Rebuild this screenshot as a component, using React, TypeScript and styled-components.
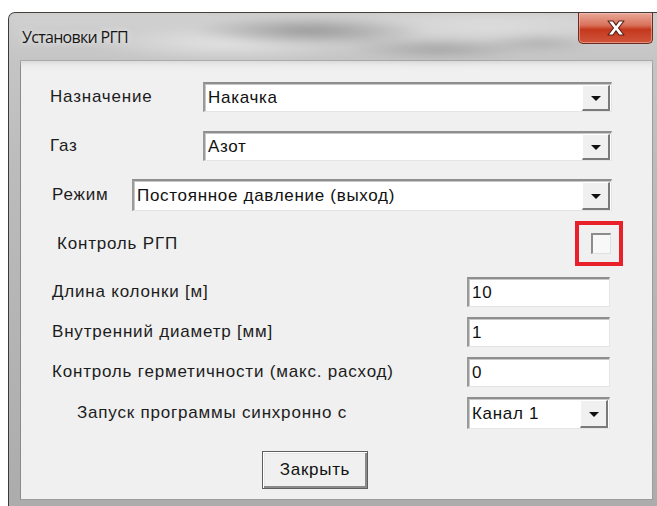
import React from "react";
import styled, { createGlobalStyle } from "styled-components";

const GlobalStyle = createGlobalStyle`
  html, body {
    margin: 0;
    padding: 0;
    background: #ffffff;
  }
  body {
    font-family: "Liberation Sans", Arial, sans-serif;
    color: #1c1c1c;
  }
`;

const Page = styled.div`
  width: 657px;
  height: 506px;
  box-sizing: border-box;
  padding: 12px 0 0 8px;
  overflow: hidden;
`;

const Window = styled.div`
  height: 494px;
  display: flex;
  flex-direction: column;
  box-sizing: border-box;
  padding: 0 4px 6px 11px;
  border-left: 1px solid #3c3a38;
  border-top: 1px solid #45403c;
  border-top-left-radius: 7px;
  background: linear-gradient(to bottom, #c9c9c9 0%, #bcbcbc 30%, #acacac 100%);
  position: relative;
  overflow: hidden;
`;

/* blurred glass behind the caption */
const Glass = styled.div`
  position: absolute;
  inset: 0 0 auto 0;
  height: 48px;
  background:
    radial-gradient(ellipse 120px 14px at 300px 18px, rgba(130, 130, 130, 0.75), transparent),
    radial-gradient(ellipse 90px 10px at 430px 36px, rgba(140, 140, 140, 0.65), transparent),
    radial-gradient(ellipse 60px 8px at 530px 30px, rgba(150, 150, 150, 0.6), transparent),
    radial-gradient(ellipse 140px 18px at 220px 30px, rgba(235, 235, 235, 0.8), transparent),
    radial-gradient(ellipse 160px 20px at 480px 14px, rgba(225, 225, 225, 0.8), transparent),
    linear-gradient(to bottom, #d2d2d2, #c4c4c4);
  filter: blur(4px);
`;

const TitleBar = styled.div`
  position: relative;
  height: 47px;
  display: flex;
  align-items: flex-start;
  justify-content: space-between;
`;

const Title = styled.div`
  margin-top: 13px;
  margin-left: 2px;
  font-family: "Open Sans", "Liberation Sans", sans-serif;
  font-size: 16px;
  color: #161616;
  letter-spacing: -0.7px;
  text-shadow: 0 0 6px rgba(255, 255, 255, 0.9);
`;

const CloseButton = styled.div`
  width: 75px;
  height: 31px;
  box-sizing: border-box;
  border: 1px solid #6a2c22;
  border-top: none;
  border-radius: 0 0 5px 5px;
  background: linear-gradient(to bottom, #e8a898 0%, #d9735c 40%, #c5391e 55%, #d0553a 100%);
  box-shadow: inset 0 0 0 1px rgba(255, 200, 190, 0.5);
  display: flex;
  align-items: center;
  justify-content: center;
`;

const Client = styled.div`
  flex: 1;
  display: flex;
  flex-direction: column;
  background: #f0f0f0;
  border: 1px solid #8a8a8a;
  border-right-color: #9c9c9c;
  border-bottom-color: #9c9c9c;
  padding-top: 21px;
`;

const Row = styled.div<{ $h: number; $mt: number; $indent: number; $right?: number }>`
  display: flex;
  align-items: center;
  height: ${(p) => p.$h}px;
  margin-top: ${(p) => p.$mt}px;
  padding-left: ${(p) => p.$indent}px;
  padding-right: ${(p) => p.$right ?? 0}px;
  flex: 0 0 auto;
`;

const Label = styled.span<{ $w?: number }>`
  font-size: 17px;
  letter-spacing: 0.8px;
  white-space: nowrap;
  ${(p) => (p.$w ? `width: ${p.$w}px; flex: 0 0 auto;` : "flex: 1 1 auto;")}
`;

const sunken = `
  box-sizing: border-box;
  background: #ffffff;
  border-style: solid;
  border-width: 2px 1px 1px 2px;
  border-color: #8e8e8e #e4e4e4 #e4e4e4 #9a9a9a;
  box-shadow: inset 1px 1px 0 #c8c8c8;
`;

const Combo = styled.div<{ $w: number; $h: number }>`
  ${sunken}
  width: ${(p) => p.$w}px;
  height: ${(p) => p.$h}px;
  display: flex;
  align-items: stretch;
`;

const FieldText = styled.span`
  flex: 1;
  display: flex;
  align-items: center;
  padding-left: 3px;
  font-size: 17px;
  letter-spacing: 0.7px;
  color: #111;
  white-space: nowrap;
`;

const DropButton = styled.div`
  width: 28px;
  flex: 0 0 auto;
  box-sizing: border-box;
  margin: 1px 1px 0 0;
  background: #f0f0f0;
  border-style: solid;
  border-width: 1px 2px 2px 1px;
  border-color: #ffffff #7a7a7a #7a7a7a #ffffff;
  display: flex;
  align-items: center;
  justify-content: center;
`;

const Arrow = styled.span`
  width: 0;
  height: 0;
  border-left: 5px solid transparent;
  border-right: 5px solid transparent;
  border-top: 5px solid #111;
  margin-top: 2px;
`;

const Input = styled.div`
  ${sunken}
  width: 143px;
  height: 30px;
  display: flex;
`;

const Highlight = styled.div`
  width: 48px;
  height: 45px;
  box-sizing: border-box;
  border: 4px solid #e8202a;
  display: flex;
  align-items: center;
  justify-content: center;
`;

const CheckBox = styled.div`
  width: 20px;
  height: 21px;
  box-sizing: border-box;
  background: #f8f8f8;
  border-style: solid;
  border-width: 2px 1px 1px 2px;
  border-color: #8c8c8c #e0e0e0 #e0e0e0 #8c8c8c;
  margin-left: 4px;
`;

const CloseDialog = styled.div`
  width: 106px;
  height: 38px;
  margin-left: 241px;
  box-sizing: border-box;
  background: #f0f0f0;
  border: 1px solid #5e5e5e;
  box-shadow: inset 1px 1px 0 #ffffff, inset -2px -2px 0 #8a8a8a, inset 2px 2px 0 #e6e6e6;
  display: flex;
  align-items: center;
  justify-content: center;
  font-size: 17px;
  letter-spacing: 0.7px;
  color: #111;
`;

const ComboField = ({ value, w, h }: { value: string; w: number; h: number }) => (
  <Combo $w={w} $h={h}>
    <FieldText>{value}</FieldText>
    <DropButton>
      <Arrow />
    </DropButton>
  </Combo>
);

const TextField = ({ value }: { value: string }) => (
  <Input>
    <FieldText>{value}</FieldText>
  </Input>
);

export default function App() {
  return (
    <Page>
      <GlobalStyle />
      <Window>
        <Glass />
        <TitleBar>
          <Title>Установки РГП</Title>
          <CloseButton>
            <svg width="22" height="18" viewBox="0 0 22 18">
              <path
                d="M3 2h5l3 4.2L14 2h5l-5.5 7 5.5 7h-5l-3-4.2L8 16H3l5.5-7z"
                fill="#ffffff"
                stroke="#5a2018"
                strokeWidth="1.2"
                strokeLinejoin="round"
              />
            </svg>
          </CloseButton>
        </TitleBar>
        <Client>
          <Row $h={30} $mt={0} $indent={29}>
            <Label $w={153}>Назначение</Label>
            <ComboField value="Накачка" w={409} h={30} />
          </Row>
          <Row $h={30} $mt={19} $indent={29}>
            <Label $w={153}>Газ</Label>
            <ComboField value="Азот" w={409} h={30} />
          </Row>
          <Row $h={32} $mt={18} $indent={31}>
            <Label $w={80}>Режим</Label>
            <ComboField value="Постоянное давление (выход)" w={480} h={32} />
          </Row>
          <Row $h={45} $mt={10} $indent={36} $right={29}>
            <Label>Контроль РГП</Label>
            <Highlight>
              <CheckBox />
            </Highlight>
          </Row>
          <Row $h={30} $mt={11} $indent={31} $right={42}>
            <Label>Длина колонки [м]</Label>
            <TextField value="10" />
          </Row>
          <Row $h={30} $mt={10} $indent={31} $right={42}>
            <Label>Внутренний диаметр [мм]</Label>
            <TextField value="1" />
          </Row>
          <Row $h={30} $mt={10} $indent={31} $right={42}>
            <Label>Контроль герметичности (макс. расход)</Label>
            <TextField value="0" />
          </Row>
          <Row $h={32} $mt={10} $indent={56} $right={42}>
            <Label>Запуск программы синхронно с</Label>
            <ComboField value="Канал 1" w={143} h={32} />
          </Row>
          <Row $h={38} $mt={22} $indent={0}>
            <CloseDialog>Закрыть</CloseDialog>
          </Row>
        </Client>
      </Window>
    </Page>
  );
}
